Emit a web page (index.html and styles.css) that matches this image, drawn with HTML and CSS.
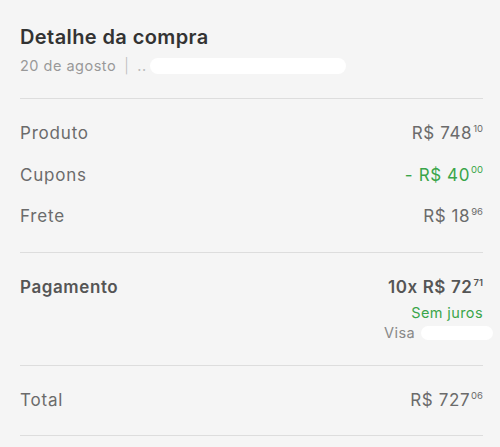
FILE: index.html
```html
<!DOCTYPE html>
<html lang="pt-BR">
<head>
<meta charset="utf-8">
<link rel="stylesheet" href="styles.css">
</head>
<body>
<div class="card">
  <header class="head">
    <h1 class="title">Detalhe da compra</h1>
    <div class="date">20 de agosto <span class="sep">|</span> <span class="dots">..</span><span class="blob blob-head"></span></div>
  </header>
  <section class="group">
    <div class="row"><span class="label">Produto</span><span class="price">R$ 748<sup>10</sup></span></div>
    <div class="row"><span class="label">Cupons</span><span class="price green">- R$ 40<sup>00</sup></span></div>
    <div class="row"><span class="label">Frete</span><span class="price">R$ 18<sup>96</sup></span></div>
  </section>
  <section class="group pay">
    <div class="row"><span class="label strong">Pagamento</span>
      <div class="paycol">
        <span class="price strong">10x R$ 72<sup>71</sup></span>
        <span class="green small">Sem juros</span>
        <span class="visa">Visa <span class="blob blob-visa"></span></span>
      </div>
    </div>
  </section>
  <section class="group total">
    <div class="row"><span class="label">Total</span><span class="price">R$ 727<sup>06</sup></span></div>
  </section>
</div>
</body>
</html>
```
FILE: styles.css
```css
html, body { margin: 0; padding: 0; }
body {
  background: #f5f5f5;
  font-family: Inter, "Open Sans", "Liberation Sans", sans-serif;
  color: #666;
  width: 500px;
  height: 447px;
  overflow: hidden;
}
.card { padding: 0 17px 0 20px; }
.head { padding-top: 24px; padding-bottom: 23px; border-bottom: 1px solid #dddddd; }
.title { margin: 0; font-size: 20px; font-weight: 600; color: #333; line-height: 26px; letter-spacing: 0.4px; }
.date { margin-top: 7px; font-size: 14.5px; color: #999; line-height: 18px; display: flex; align-items: center; gap: 5px; letter-spacing: 0.5px; }
.sep { margin-left: 3px; color: #bbb; font-weight: 300; }
.dots { color: #bbb; margin-left: 3px; }
.blob { display: inline-block; background: #fff; border-radius: 8px; }
.blob-head { width: 196px; height: 16px; margin-left: -2px; }
.group { border-bottom: 1px solid #dddddd; padding: 24px 0 26px; }
.row { display: flex; justify-content: space-between; align-items: flex-start; height: 20px; margin-bottom: 21.5px; font-size: 17px; line-height: 20px; letter-spacing: 0.6px; }
.group .row:last-child { margin-bottom: 0; }
.label { color: #6b6b6b; letter-spacing: 0.8px; }
.price { color: #6b6b6b; }
.price sup { font-size: 9.5px; vertical-align: 0; position: relative; top: -7.5px; margin-left: 1px; letter-spacing: 0; }
.green { color: #3aa54a; }
.strong { font-weight: 600; color: #555; letter-spacing: 0.6px; }
.pay { padding-bottom: 22px; }
.pay .row { height: auto; }
.paycol { display: flex; flex-direction: column; align-items: flex-end; }
.small { font-size: 14.5px; line-height: 20px; margin-top: 3px; letter-spacing: 0.4px; }
.visa { font-size: 14.5px; color: #888; line-height: 20px; display: flex; align-items: center; margin-right: -10px; letter-spacing: 0.4px; }
.blob-visa { width: 72px; height: 14px; margin-left: 6px; }
.total { padding: 24px 0 25px; }
```
